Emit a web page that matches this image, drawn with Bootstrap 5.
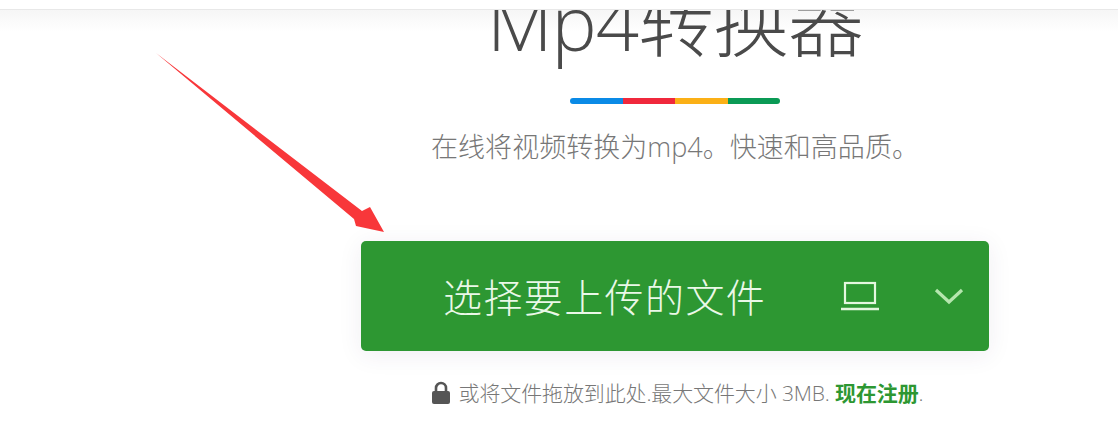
<!DOCTYPE html>
<html lang="zh">
<head>
<meta charset="utf-8">
<title>Mp4转换器</title>
<link href="https://cdn.jsdelivr.net/npm/bootstrap@5.3.0/dist/css/bootstrap.min.css" rel="stylesheet">
<style>
html,body{height:100%;overflow:hidden;background:#fff}
body{font-family:"Open Sans","Noto Sans CJK SC",sans-serif;position:relative}
.topstrip{height:10px;background:#fff;border-bottom:1px solid #e8e8e8;position:relative;z-index:2}
.shade{height:22px;background:linear-gradient(#f6f6f6,#fff);margin-bottom:-22px}
.pagewrap{height:434px;overflow:hidden}
.shift-main{padding-left:232px}
.hero-title{font-family:"Open Sans","Noto Sans CJK SC",sans-serif;font-size:76px;font-weight:200;line-height:80px;color:#4a4a4a;margin:-28px 0 6px;height:80px;letter-spacing:-1px;white-space:nowrap}
.rainbow{width:210px;height:6px;border-radius:3px;overflow:hidden;margin-top:30px}
.rainbow span{flex:1 1 0}
.seg-a{background:#0a8ae6}.seg-b{background:#f0283c}.seg-c{background:#fbb016}.seg-d{background:#0a9a55}
.tagline{font-size:27px;line-height:36px;color:#777;margin:25px 0 0;letter-spacing:.03px;font-weight:200;white-space:nowrap}
.upload{width:628px;height:110px;margin-top:76px;background:#2d9732;border-radius:5px;color:#eaf8e8;box-shadow:0 4px 24px rgba(60,40,90,.08);cursor:pointer}
.upload-label{font-size:39px;line-height:1;font-weight:300;margin-left:82px;width:322px;white-space:nowrap;letter-spacing:1.4px;text-align:left}
.pc-ico{margin-left:76px;width:38px;height:30px;flex:none}
.chev-ico{margin-left:55px;width:30px;height:18px;flex:none}
.finenote{font-size:21px;line-height:24px;color:#777;margin-top:30px;margin-left:4px;font-weight:300;letter-spacing:-.12px;white-space:nowrap}
.finenote a{color:#2d9732;font-weight:700;text-decoration:none}
.lock-ico{width:20px;height:24px;flex:none}
.pointer{position:absolute;left:150px;top:48px;width:240px;height:190px;z-index:3}
</style>
</head>
<body>
<div class="topstrip"></div>
<div class="pagewrap">
  <div class="shade"></div>
  <main class="shift-main d-flex flex-column align-items-center text-center">
    <h1 class="hero-title">Mp4转换器</h1>
    <div class="rainbow d-flex"><span class="seg-a"></span><span class="seg-b"></span><span class="seg-c"></span><span class="seg-d"></span></div>
    <p class="tagline">在线将视频转换为mp4。快速和高品质。</p>
    <div class="upload d-flex align-items-center" role="button">
      <span class="upload-label">选择要上传的文件</span>
      <svg class="pc-ico" viewBox="0 0 38 30" fill="none" stroke="#e4f7df" stroke-width="2.2"><rect x="4" y="2" width="30" height="20"/><path d="M0 28h38" stroke-width="2.6"/></svg>
      <svg class="chev-ico" viewBox="0 0 30 18" fill="none" stroke="#b5e6ae" stroke-width="3.2"><path d="M2 3l13 12L28 3"/></svg>
    </div>
    <div class="finenote d-flex align-items-center gap-2">
      <svg class="lock-ico" viewBox="0 0 20 24"><path fill="none" stroke="#555" stroke-width="2.6" d="M5 11V7a5 5 0 0 1 10 0v4"/><rect x="1" y="10" width="18" height="13" rx="2" fill="#555"/></svg>
      <span>或将文件拖放到此处.最大文件大小 3MB. <a href="#">现在注册</a>.</span>
    </div>
  </main>
</div>
<svg class="pointer" viewBox="150 48 240 190"><polygon fill="#f8373a" points="156,53 362,211 370,207 384,232 356,226 354,219"/></svg>
<script src="https://cdn.jsdelivr.net/npm/bootstrap@5.3.0/dist/js/bootstrap.bundle.min.js"></script>
</body>
</html>
